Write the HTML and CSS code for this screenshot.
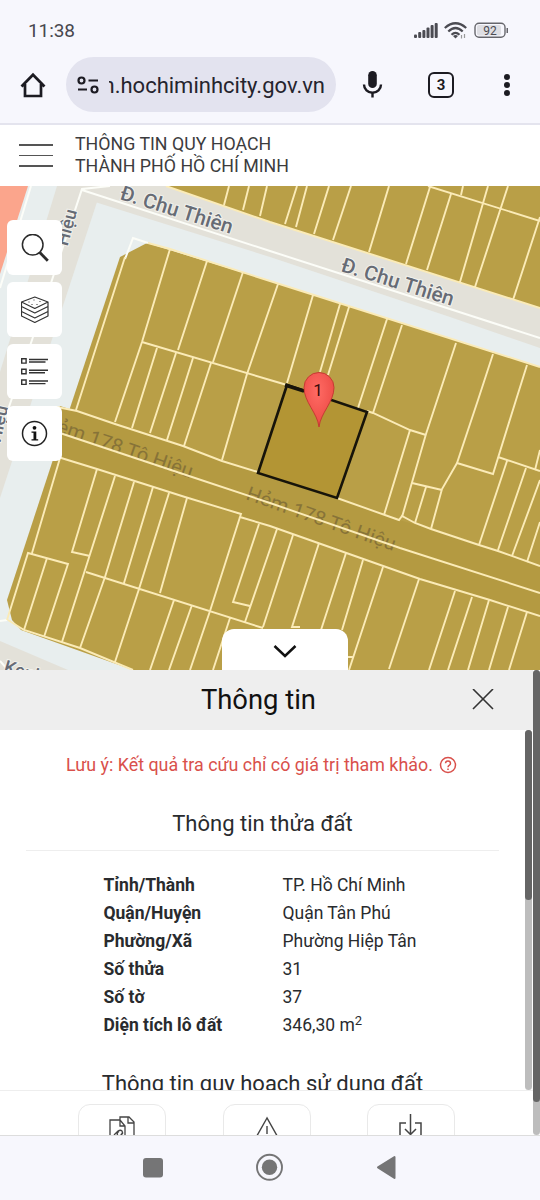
FILE: index.html
```html
<!DOCTYPE html>
<html lang="vi">
<head>
<meta charset="utf-8">
<title>Thông tin quy hoạch</title>
<link rel="stylesheet" href="styles.css">
</head>
<body>
<div class="phone">
  <header class="status">
    <span class="clock">11:38</span>
    <svg class="status-icons" width="94" height="18" viewBox="414 22 94 18">
      <g fill="#4b4b52"><rect x="414" y="34.500" width="3" height="3.500" rx="1"/><rect x="418.200" y="32" width="3" height="6" rx="1"/><rect x="422.400" y="30" width="3" height="8" rx="1"/><rect x="426.500" y="27.500" width="3" height="10.500" rx="1"/><rect x="430.600" y="25" width="3" height="13" rx="1"/><rect x="434.700" y="23" width="3" height="15" rx="1"/></g>
      <g fill="none" stroke="#4b4b52" stroke-width="2.200"><path d="M444.800 28Q455.500 18.500 466.200 28M448.300 31.500Q455.500 24.500 462.700 31.500M451.500 34.800Q455.500 31 459.500 34.800"/></g>
      <path d="M453 36Q455.500 34 458 36L455.500 38.500Z" fill="#4b4b52"/>
      <path d="M461.500 35v3.500M464.500 34v4" stroke="#999" stroke-width="1.200"/>
      <rect x="475" y="23.200" width="30" height="14" rx="4" fill="#f7f7fd" stroke="#66666c" stroke-width="1.400"/>
      <rect x="477" y="25" width="24" height="10.500" rx="2" fill="#dedee3"/>
      <path d="M507.300 28v5" stroke="#66666c" stroke-width="1.600"/>
      <text x="490" y="34.700" text-anchor="middle" font-size="12" fill="#4b4b52">92</text>
    </svg>
  </header>

  <div class="browser">
    <svg class="home" width="26" height="28" viewBox="20 71 26 28" fill="none" stroke="#1c1b22" stroke-width="2.700"><path d="M21.500 86.500 33 74.800 44.500 86.500M25 84v12h16V84"/></svg>
    <div class="address">
      <svg width="22" height="18" viewBox="77 76 22 18" fill="none" stroke="#1c1b22" stroke-width="2.200"><circle cx="81.500" cy="80.500" r="3"/><path d="M88.500 80.500h9.500M78 89.500h9"/><circle cx="94.500" cy="89.500" r="3"/></svg>
      <div class="url"><span>n.hochiminhcity.gov.vn</span></div>
    </div>
    <svg class="mic" width="22" height="30" viewBox="361 70 22 30"><rect x="368.200" y="71" width="8.600" height="17" rx="4.300" fill="#1c1b22"/><path d="M364 84.500a8.500 8.200 0 0 0 17 0M372.500 93v4.500" fill="none" stroke="#1c1b22" stroke-width="2.400"/></svg>
    <div class="tabs">3</div>
    <div class="dots"><i></i><i></i><i></i></div>
  </div>

  <div class="sitebar">
    <div class="burger"><i></i><i></i><i></i></div>
    <div class="brand">THÔNG TIN QUY HOẠCH<br>THÀNH PHỐ HỒ CHÍ MINH</div>
  </div>

  <main class="map">
    <svg class="plan" width="540" height="484" viewBox="0 186 540 484">
      <rect y="186" width="540" height="484" fill="#e8eeee"/>
      <path d="M0 186H28L0 274Z" fill="#fba58c"/>
      <path d="M57 186H100L97 202 0 498V372Z" fill="#e3e1d9"/>
      <path d="M75 186H170L270 220 540 307V348L450 317 270 257 95 202Z" fill="#e3e1d9"/>
      <path d="M0 641 68 670H0Z" fill="#e3e1d9"/>
      <g fill="none" stroke="#fcfdf8" stroke-width="2">
        <path d="M31 186 0 288M110 186 82 189 53 277 32 340 0 433M82 190 270 251 540 338M22 407 57 410"/>
        <path d="M0 621 7 620M0 661 8 670"/>
      </g>
      <path d="M147 243 120 257 66 420 7 600 12 620 21 630 133 670H540V367L270 281Z" fill="#b99f47"/>
      <path d="M166 186H540V308L270 222Z" fill="#b99f47"/>
      <path d="M60 406 115 424 183 446 258 472 337 498 399 520 431 529 540 566V616L420 579 270 526 185 497 58 457 49 455Z" fill="#b49a41"/>
      <g fill="#877338">
        <text transform="translate(42 427) rotate(19)" font-size="19.500" textLength="157" lengthAdjust="spacingAndGlyphs">Hẻm 178 Tô Hiệu</text>
        <text transform="translate(245 499) rotate(19.300)" font-size="19.500" textLength="157" lengthAdjust="spacingAndGlyphs">Hẻm 178 Tô Hiệu</text>
      </g>
      <path d="M287 385 367 412 337 498 258 473Z" fill="#b39534"/>
      <path d="M125 259 133 238 148 243" fill="none" stroke="#fcfdf8" stroke-width="2"/>
      <g class="parcels">
        <path d="M148 243 170 249 270 281 540 367M125 257 76 410M170 249 142 342 115 422M207 261 178 350M243 272 213 362M278 284 247 374 222 460M313 295 287 383M340 304 320 372M349 307 328 375M387 319 358 408M402 325 373 413M456 343 426 434 402 517M540 450 535 470"/>
        <path d="M142 342 270 380 287 385M367 411 373 413 410 430 426 435M410 430 384 515M412 483 442 490M426 487 415 523M493 354 478 400 457 463 442 489 431 529M527 365 516 400 493 474 457 463M498 457 540 471M507 461 479 545M526 468 498 550M540 480 512 556M540 522 527 562"/>
        <path d="M157 348 132 428M176 353 150 433M193 358 167 440M211 363 184 446M57 407 77 411 115 424 183 446 222 461 258 472M337 498 399 520 402 516 415 523 431 529 479 545 498 551 540 566"/>
        <path d="M60 433 180 473 270 503 400 548 540 593M58 457 97 469 185 497 241 514 240 517 270 526 420 579 490 600 540 616"/>
        <path d="M60 458 32 553M7 620 28 553 68 564 44 637M47 558 24 630M97 469 72 552 90 556M115 476 62 642M134 482 105 577 80 648M153 487 124 583M169 493 139 589 115 662M187 498 160 593M240 517 210 611 190 670M86 572 263 628M174 600 150 670M192 605 169 670M230 618 213 670M259 524 233 602 250 606M277 529 245 622M293 535 263 627M319 543 292 627H300M346 553 321 630M363 560 342 630M383 567 349 670M347 657H353M419 579 389 669M455 591 429 670M472 597 448 670M489 600 468 670M508 607 489 670M527 612 509 670M8 620 24 630 80 648 133 670"/>
        <path d="M166 186 270 222 540 308M229 186 224 205M249 186 243 210M267 186 260 216M297 186 285 224M307 186 296 227M329 186 314 234M351 186 333 240M389 186 369 252M430 187 406 264M451 194 427 270M488 186 460 282M508 186 475 287M540 217 513 300M463 186 461 195M428 186 540 221"/>
      </g>
      <path d="M287 385 367 412 337 498 258 473Z" fill="none" stroke="#17140a" stroke-width="2.600"/>
      <path d="M285 385 304 391" stroke="#17140a" stroke-width="3.500"/>
      <g font-weight="500" fill="#666b75" stroke="#f2f1ec" stroke-width="2" paint-order="stroke">
        <text transform="translate(119 199) rotate(17.400)" font-size="20.500" textLength="117" lengthAdjust="spacingAndGlyphs">Đ. Chu Thiên</text>
        <text transform="translate(340 271) rotate(17.400)" font-size="20.500" textLength="117" lengthAdjust="spacingAndGlyphs">Đ. Chu Thiên</text>
        <text transform="translate(77 211) rotate(-75)" font-size="18" text-anchor="end">Hiệu</text>
        <text transform="translate(8 407) rotate(-78)" font-size="18" text-anchor="end">Hiệu</text>
        <text transform="translate(3 672) rotate(16)" font-size="18">Kenh</text>
      </g>
      <defs><radialGradient id="pin" cx=".45" cy=".35" r=".75"><stop offset="0" stop-color="#ff6b64"/><stop offset="1" stop-color="#e9443f"/></radialGradient></defs>
      <path d="M319 427C317.500 413 304 402 304 387.500A15 15 0 0 1 334 387.500C334 402 320.500 413 319 427Z" fill="url(#pin)" stroke="#c63a33"/>
      <text x="318" y="395.500" text-anchor="middle" font-size="17" fill="#3a0d0b">1</text>
    </svg>

    <div class="tools">
      <button><svg width="28" height="28" viewBox="20 233 28 28" fill="none" stroke="#2b2b2b"><circle cx="31.700" cy="243.700" r="10.300" stroke-width="1.500"/><path d="m38.800 251.500 8 8.300" stroke-width="2.800"/></svg></button>
      <button><svg width="28" height="28" viewBox="20.500 295 28 28" fill="none" stroke="#333" stroke-width="1.200" stroke-linejoin="round"><path d="m34.300 296 13.200 5-13.200 6.500L21 301ZM21 301v14l13.300 6.500 13.200-6.500V301M21 305.500l13.300 6.500 13.200-6.500M21 310.500l13.300 6.500 13.200-6.500"/><path d="M28 301h1M33 299h1M31 303.500h1M36 303.500h1M39 300.500h1" stroke-width="1"/></svg></button>
      <button><svg width="28" height="28" viewBox="21 358 28 28" fill="none" stroke="#333" stroke-width="1.400"><path d="M21.700 358.700h4.400v4.400h-4.400zM21.700 369.300h4.400v4.400h-4.400zM21.700 380h4.400v4.400h-4.400zM29 359.500h19M29 362h16.500M29 370.200h19M29 372.800h16M29 381h19M29 383.600h16.500"/></svg></button>
      <button><svg width="28" height="28" viewBox="20.500 419.500 28 28"><circle cx="34" cy="433" r="12" fill="none" stroke="#222" stroke-width="1.500"/><circle cx="34" cy="427.300" r="1.900" fill="#111"/><path d="M31 431h4.800v7.800h1.900v1.200H31v-1.200h2v-6.600h-2Z" fill="#111"/></svg></button>
    </div>
    <div class="drawer-handle"><svg width="24" height="16" viewBox="0 0 24 16" fill="none" stroke="#111" stroke-width="2.500"><path d="m1.500 1 10.500 10L22.500 1"/></svg></div>
  </main>

  <section class="panel">
    <div class="content">
      <div class="panel-head"><h1>Thông tin</h1><svg class="close" width="22" height="22" viewBox="0 0 22 22" stroke="#333" stroke-width="1.600"><path d="m1 0 20 20M21 0 1 20"/></svg></div>
      <div class="body-row">
        <div class="details">
          <p class="notice"><span>Lưu ý: Kết quả tra cứu chỉ có giá trị tham khảo.</span><svg width="18" height="18" viewBox="0 0 18 18" fill="none" stroke="#d9504b" stroke-width="1.500"><circle cx="9" cy="9" r="7.500"/><path d="M6.500 7.200a2.500 2.300 0 1 1 3.900 2Q9 10 9 11.200M9 12.400v1.500"/></svg></p>
          <h2>Thông tin thửa đất</h2>
          <dl>
            <dt>Tỉnh/Thành</dt><dd>TP. Hồ Chí Minh</dd>
            <dt>Quận/Huyện</dt><dd>Quận Tân Phú</dd>
            <dt>Phường/Xã</dt><dd>Phường Hiệp Tân</dd>
            <dt>Số thửa</dt><dd>31</dd>
            <dt>Số tờ</dt><dd>37</dd>
            <dt>Diện tích lô đất</dt><dd>346,30 m<sup>2</sup></dd>
          </dl>
          <h2 class="land-use">Thông tin quy hoạch sử dụng đất</h2>
        </div>
        <div class="track inner"><i></i></div>
      </div>
      <div class="actions">
        <button><svg width="28" height="30" viewBox="0 0 28 30" fill="none" stroke="#444" stroke-width="1.300"><path d="M12 4V1h9l5 5v22M20 1v6h6M12 4l5 6v18M2 28V4h10M12 4v6h5"/><path d="m6 19 4-4q2.500-1.500 4 0 1.200 2-1 3.600M11 15.500q-3 2-1 4 3 1 5-3"/></svg></button>
        <button><svg width="28" height="30" viewBox="0 0 28 30" fill="none" stroke="#444" stroke-width="1.400"><path d="M14 2 1 25h26ZM14 10v8"/></svg></button>
        <button class="download"><svg width="28" height="30" viewBox="0 0 28 30" fill="none" stroke="#444" stroke-width="1.500"><path d="M9 9H3v20h21V9h-6M13.500 0v20M8 15l5.500 5.500L19 15"/></svg></button>
      </div>
    </div>
    <div class="track outer"><i></i></div>
  </section>

  <nav class="system">
    <svg width="540" height="64" viewBox="0 1136 540 64"><rect x="143" y="1158" width="20" height="19.500" rx="3" fill="#757576"/><circle cx="269.500" cy="1167.300" r="12.500" fill="none" stroke="#757576" stroke-width="1.900"/><circle cx="269.500" cy="1167.300" r="7.700" fill="#757576"/><path d="M378 1167.400 394.500 1157v21Z" fill="#757576" stroke="#757576" stroke-width="2" stroke-linejoin="round"/></svg>
  </nav>
</div>
</body>
</html>
```
FILE: styles.css
```css
* { box-sizing: border-box; }
body { margin: 0; font-family: Roboto, sans-serif; color: #292b2e; }
svg { display: block; flex: none; }
button { font: inherit; padding: 0; border: 0; background: #fff; }
.phone { width: 540px; height: 1200px; display: flex; flex-direction: column; overflow: hidden; background: #fff; }

.status { height: 46px; padding: 22px 32px 0 28px; display: flex; justify-content: space-between; background: #f7f7fd; }
.clock { font-size: 19px; line-height: 18px; letter-spacing: -.1px; color: #48484e; }
.browser { height: 79px; display: flex; align-items: center; padding: 0 29px 0 20px; background: #f7f7fd; border-bottom: 2px solid #e4e4ee; }
.address { width: 270px; height: 55px; margin-left: 20px; border-radius: 28px; background: #e3e3ef; display: flex; align-items: center; padding-left: 11px; }
.url { width: 216px; margin-left: 10px; overflow: hidden; display: flex; justify-content: flex-end; padding-top: 2px; font-size: 22px; line-height: 30px; color: #25242d; }
.mic { margin-left: 25px; }
.tabs { width: 26px; height: 26px; margin-left: 45px; border: 2.5px solid #1c1b22; border-radius: 6px; font-size: 15px; font-weight: 700; line-height: 22px; text-align: center; color: #1c1b22; }
.dots { width: 7px; margin-left: auto; display: grid; gap: 2px; }
.dots i { width: 6px; height: 6px; border-radius: 50%; background: #1c1b22; }

.sitebar { height: 61px; display: flex; padding: 0 19px; }
.burger { width: 34px; margin-right: 22px; padding-top: 19px; display: grid; gap: 9px; align-content: start; }
.burger i { height: 1.5px; background: #555; }
.brand { padding-top: 8px; font-size: 17.800px; line-height: 21.500px; color: #3c3c3e; white-space: nowrap; }

.map { height: 484px; display: grid; position: relative; }
.tools { position: absolute; left: 7px; top: 34px; display: grid; gap: 7px; }
.tools button { width: 55px; height: 55px; border-radius: 6px; display: grid; place-items: center; }
.drawer-handle { position: absolute; left: 222px; bottom: 0; width: 126px; height: 41px; border-radius: 12px 12px 0 0; background: #fff; display: flex; justify-content: center; padding-top: 16px; }
.parcels { fill: none; stroke: #fbebb7; stroke-width: 1.900; }

.panel { height: 466px; display: flex; border-bottom: 1px solid #ddd; }
.content { width: 533px; display: flex; flex-direction: column; overflow: hidden; }
.panel-head { height: 60px; flex: none; background: #eee; display: flex; align-items: center; justify-content: flex-end; padding-right: 39px; }
h1 { margin: 0 156px 0 0; font-size: 27.400px; font-weight: 400; line-height: 34px; color: #111; }
.body-row { height: 360px; flex: none; display: flex; overflow: hidden; }
.details { width: 525px; padding: 0 26px; overflow: hidden; }
.notice { margin: 24px 0 0 40px; display: flex; gap: 6px; align-items: center; font-size: 17.850px; line-height: 22px; color: #d9504b; white-space: nowrap; }
h2 { margin: 34px 0 20px; height: 41px; border-bottom: 1px solid #eee; text-align: center; font-size: 22px; font-weight: 400; line-height: 28px; }
dl { margin: 0 0 0 77.500px; display: grid; grid-template-columns: 179px 1fr; grid-auto-rows: 28px; line-height: 28px; font-size: 17.500px; }
dt { font-weight: 700; }
dd { margin: 0; }
sup { font-size: 13px; line-height: 0; vertical-align: 6px; }
.land-use { margin: 31px 0 0; border: 0; white-space: nowrap; }
.track { width: 7px; background: #bdbdbd; border-radius: 4px; }
.track i { display: block; background: #656565; border-radius: 4px; }
.inner i { height: 170px; }
.outer i { height: 432px; }
.actions { height: 46px; border-top: 1px solid #eee; padding: 13px 78px 0; display: flex; justify-content: space-between; overflow: hidden; }
.actions button { width: 88px; height: 60px; flex: none; border: 1px solid #e9e9e9; border-radius: 12px; display: flex; justify-content: center; padding-top: 11px; }
.actions .download { padding-top: 9px; }
.system { height: 64px; background: #f7f7fd; }
```
